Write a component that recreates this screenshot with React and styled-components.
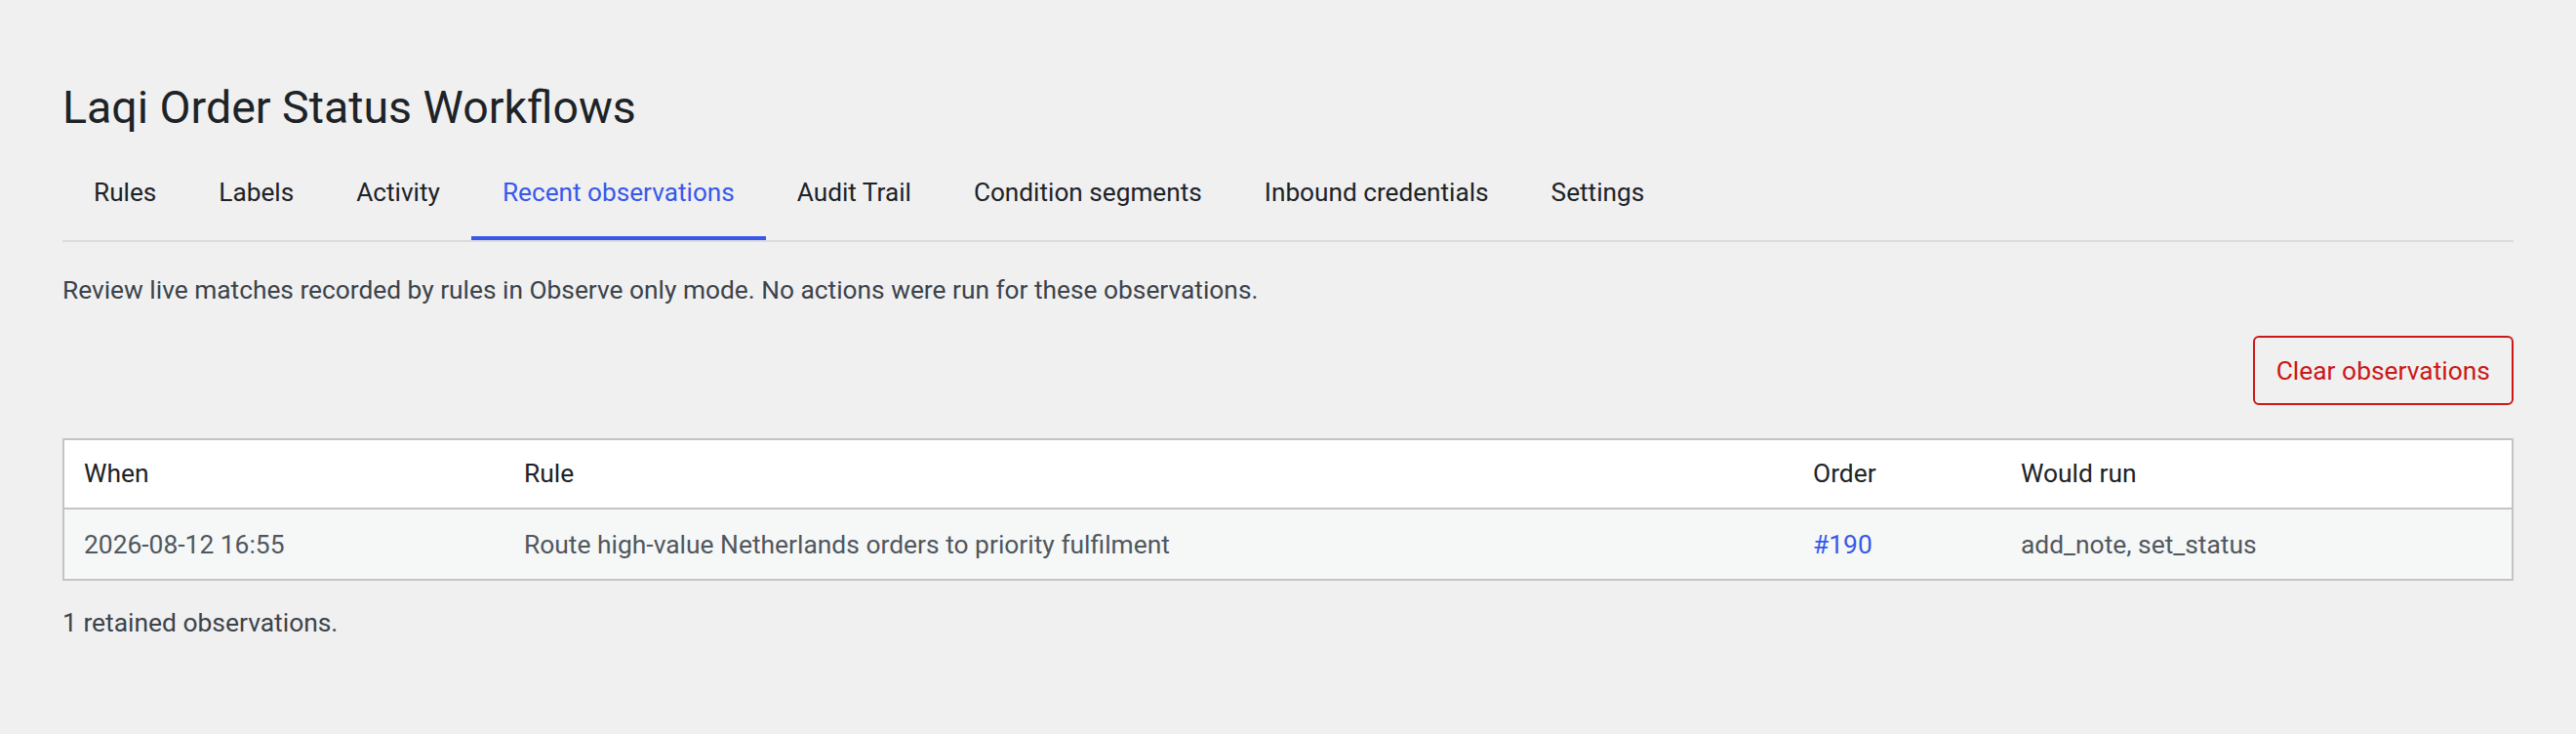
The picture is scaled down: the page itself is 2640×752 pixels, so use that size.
import React from "react";
import styled, { createGlobalStyle } from "styled-components";

const GlobalStyle = createGlobalStyle`
  html, body { margin: 0; padding: 0; }
  body {
    background: #f0f0f1;
    font-family: Roboto, "Liberation Sans", Arial, sans-serif;
    color: #3c434a;
    -webkit-font-smoothing: antialiased;
  }
`;

const Page = styled.div`
  padding: 80px 64px 40px 64px;
  min-height: 752px;
  box-sizing: border-box;
`;

const Title = styled.h1`
  margin: 0 0 12px 0;
  font-size: 46.5px;
  line-height: 60px;
  font-weight: 400;
  color: #1d2327;
`;

const TabBar = styled.nav`
  display: flex;
  border-bottom: 2px solid #dcdcde;
`;

const Tab = styled.a`
  display: block;
  padding: 25px 32px 25px 32px;
  font-size: 26.2px;
  line-height: 40px;
  color: ${(p) => (p.$active ? "#3858e9" : "#1d2327")};
  border-bottom: 4px solid ${(p) => (p.$active ? "#3858e9" : "transparent")};
  text-decoration: none;
  cursor: pointer;
  white-space: nowrap;
`;

const Description = styled.p`
  margin: 29px 0 0 0;
  font-size: 26.3px;
  line-height: 40px;
  color: #3c434a;
`;

const Actions = styled.div`
  display: flex;
  justify-content: flex-end;
  margin-top: 27px;
`;

const DangerButton = styled.button`
  box-sizing: border-box;
  height: 71px;
  padding: 0 22px;
  border: 2px solid #cc1818;
  border-radius: 6px;
  background: transparent;
  color: #cc1818;
  font-family: inherit;
  font-size: 26.4px;
  line-height: 40px;
  cursor: pointer;
`;

const Table = styled.table`
  width: 100%;
  margin-top: 34px;
  border-collapse: separate;
  border-spacing: 0;
  table-layout: fixed;
  border: 2px solid #c3c4c7;
  background: #fff;
`;

const HeadCell = styled.th`
  text-align: left;
  font-weight: 400;
  font-size: 26.4px;
  line-height: 36px;
  padding: 16px 20px 17px 20px;
  color: #1d2327;
  border-bottom: 2px solid #c3c4c7;
  background: #fff;
`;

const Cell = styled.td`
  font-size: 26.4px;
  line-height: 40px;
  padding: 16px 20px 15px 20px;
  color: #50575e;
  background: #f6f7f7;
`;

const OrderLink = styled.a`
  color: #3858e9;
  text-decoration: none;
`;

const Footer = styled.p`
  margin: 23px 0 0 0;
  font-size: 26.4px;
  line-height: 40px;
  color: #3c434a;
`;

const tabs = [
  "Rules",
  "Labels",
  "Activity",
  "Recent observations",
  "Audit Trail",
  "Condition segments",
  "Inbound credentials",
  "Settings",
];

const columns = [
  { label: "When", width: 451 },
  { label: "Rule", width: 1321 },
  { label: "Order", width: 213 },
  { label: "Would run" },
];

const rows = [
  {
    when: "2026-08-12 16:55",
    rule: "Route high-value Netherlands orders to priority fulfilment",
    order: "#190",
    run: "add_note, set_status",
  },
];

export default function App() {
  return (
    <>
      <GlobalStyle />
      <Page>
        <Title>Laqi Order Status Workflows</Title>
        <TabBar>
          {tabs.map((t) => (
            <Tab key={t} $active={t === "Recent observations"}>
              {t}
            </Tab>
          ))}
        </TabBar>
        <Description>
          Review live matches recorded by rules in Observe only mode. No actions were run for these observations.
        </Description>
        <Actions>
          <DangerButton type="button">Clear observations</DangerButton>
        </Actions>
        <Table>
          <colgroup>
            {columns.map((c) => (
              <col key={c.label} style={c.width ? { width: c.width } : undefined} />
            ))}
          </colgroup>
          <thead>
            <tr>
              {columns.map((c) => (
                <HeadCell key={c.label}>{c.label}</HeadCell>
              ))}
            </tr>
          </thead>
          <tbody>
            {rows.map((r) => (
              <tr key={r.order}>
                <Cell>{r.when}</Cell>
                <Cell>{r.rule}</Cell>
                <Cell>
                  <OrderLink href="#">{r.order}</OrderLink>
                </Cell>
                <Cell>{r.run}</Cell>
              </tr>
            ))}
          </tbody>
        </Table>
        <Footer>1 retained observations.</Footer>
      </Page>
    </>
  );
}
